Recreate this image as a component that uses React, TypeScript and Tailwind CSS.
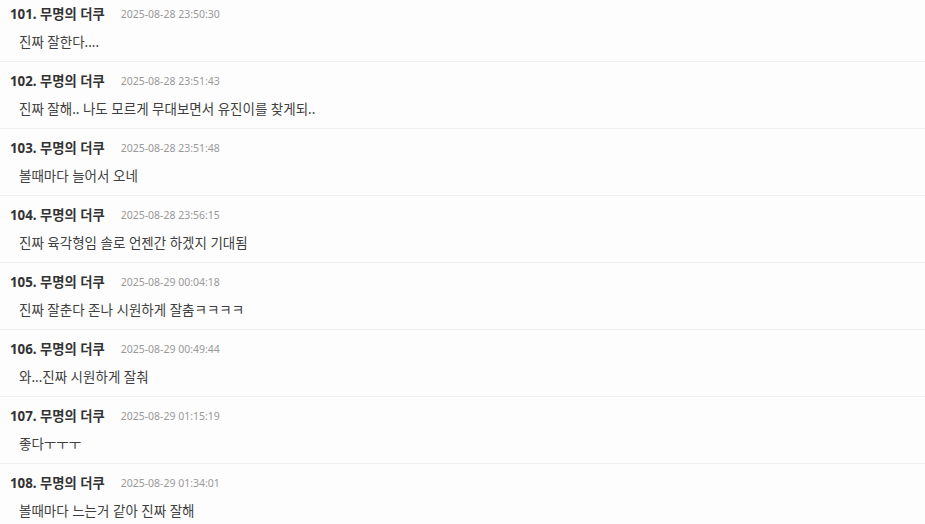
const comments = [
  { no: 101, date: '2025-08-28 23:50:30', text: '진짜 잘한다....' },
  { no: 102, date: '2025-08-28 23:51:43', text: '진짜 잘해.. 나도 모르게 무대보면서 유진이를 찾게되..' },
  { no: 103, date: '2025-08-28 23:51:48', text: '볼때마다 늘어서 오네' },
  { no: 104, date: '2025-08-28 23:56:15', text: '진짜 육각형임 솔로 언젠간 하겠지 기대됨' },
  { no: 105, date: '2025-08-29 00:04:18', text: '진짜 잘춘다 존나 시원하게 잘춤ㅋㅋㅋㅋ' },
  { no: 106, date: '2025-08-29 00:49:44', text: '와...진짜 시원하게 잘춰' },
  { no: 107, date: '2025-08-29 01:15:19', text: '좋다ㅜㅜㅜ' },
  { no: 108, date: '2025-08-29 01:34:01', text: '볼때마다 느는거 같아 진짜 잘해' },
];

export default function App() {
  return (
    <div className="h-[524px] overflow-hidden bg-[#fdfdfd] font-['Noto_Sans','Noto_Sans_CJK_KR',sans-serif]">
      <ul className="-mt-[5px]">
        {comments.map((c) => (
          <li key={c.no} className="border-b border-[#efefef] pt-[12px] pb-[9px]">
            <div className="flex items-center h-4 pl-[10px]">
              <span className="text-[13.3px] font-bold text-[#333]">
                {c.no}. 무명의 더쿠
              </span>
              <span className="ml-[16px] text-[10.5px] text-[#999]">{c.date}</span>
            </div>
            <p className="mt-[9px] h-5 leading-5 pl-[19px] text-[13.5px] text-[#3f3f3f]">{c.text}</p>
          </li>
        ))}
      </ul>
    </div>
  );
}
